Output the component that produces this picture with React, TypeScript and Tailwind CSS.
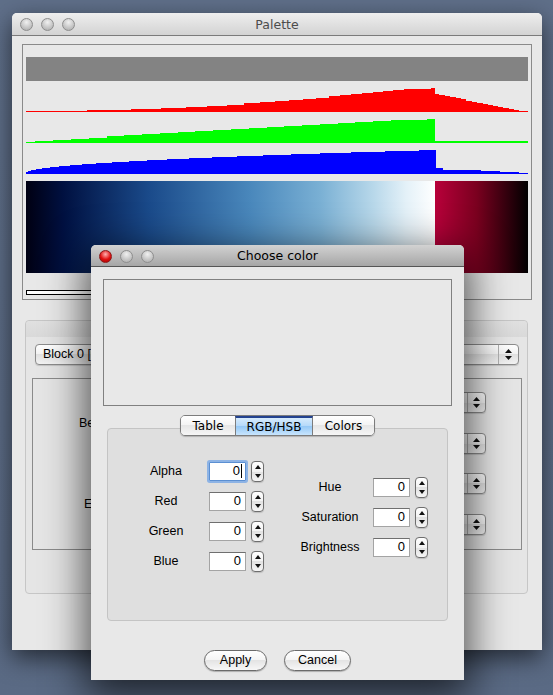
import React from 'react';

type Step = [number, number];

// histogram steps: [absolute x where the step starts, height]
const red: Step[] = [
  [26, 1], [87, 2.3], [131, 3.3], [161, 4.3], [186, 5.3], [207, 6.3], [227, 7.3], [244, 9], [260, 10],
  [275, 11], [289, 12], [303, 13.3], [316, 14.3], [329, 15.7], [340, 16.7], [351, 17.7], [362, 18.7],
  [373, 19.7], [383, 20.7], [393, 21.7], [404, 22.7], [413, 23], [423, 23.3], [431, 24.3],
  [435, 17.7], [439, 16.7], [445, 15.7], [450, 14.7], [456, 13.7], [461, 12.7], [466, 11.3], [472, 10.3],
  [477, 9.3], [483, 8], [488, 7], [493, 6], [498, 5], [503, 4], [509, 3], [514, 2], [519, 1], [525, 0.7],
];

const green: Step[] = [
  [26, 1.3], [35, 2.3], [53, 3.3], [71, 4.3], [89, 5.3], [107, 6.7], [124, 7.7], [142, 8.7], [160, 10],
  [178, 11], [195, 12], [213, 13], [231, 14], [249, 15], [267, 16], [284, 17], [302, 18], [320, 19],
  [338, 20], [355, 21], [373, 22], [391, 23], [409, 23.3], [427, 24.3], [435, 1.7],
];

const blue: Step[] = [
  [26, 2], [28, 3], [31.4, 4], [35.9, 5], [42.1, 6], [50, 7], [59, 8], [70, 9.3], [82, 10.3], [96.2, 11.3],
  [112, 12.3], [129.3, 13.3], [147.2, 14.3], [167.2, 15.3], [189.3, 16.3], [212.4, 17.3], [237.2, 18.3],
  [263.4, 19.3], [291.4, 20.3], [320.3, 21.3], [351.4, 22.3], [384.5, 22.7], [418.6, 23.7],
  [435.5, 5.7], [442.7, 4.3], [461.7, 3.7], [481, 2.7], [500, 1.7], [519, 0.7],
];

function stepPath(steps: Step[], end: number, base: number) {
  let d = `M ${steps[0][0] - 26} ${base}`;
  steps.forEach(([x, h], i) => {
    const next = i < steps.length - 1 ? steps[i + 1][0] : end;
    d += ` L ${x - 26} ${base - h} L ${next - 26} ${base - h}`;
  });
  d += ` L ${end - 26} ${base} Z`;
  return d;
}

const Light: React.FC<{ red?: boolean }> = ({ red }) => (
  <div
    className={
      red
        ? 'w-[13px] h-[13px] rounded-full border border-[#8a1a1a] bg-[radial-gradient(circle_at_50%_30%,#ffb0b0,#e01010_55%,#a00000)]'
        : 'w-[13px] h-[13px] rounded-full border border-[#8e8e8e] bg-[radial-gradient(circle_at_50%_30%,#f0f0f0,#c4c4c4_60%,#a8a8a8)]'
    }
  />
);

const Arrows: React.FC = () => (
  <div className="flex flex-col items-center gap-[3px]">
    <svg width="7" height="4" viewBox="0 0 7 4"><path d="M3.5 0L7 4H0z" fill="#111" /></svg>
    <svg width="7" height="4" viewBox="0 0 7 4"><path d="M0 0H7L3.5 4z" fill="#111" /></svg>
  </div>
);

const Spin: React.FC = () => (
  <div className="ml-[5px] w-[13px] h-[21px] rounded-[4px] border border-[#6e6e6e] bg-[linear-gradient(#ffffff,#f2f2f2_50%,#e2e2e2_50%,#f5f5f5)] flex flex-col items-center justify-between py-[3px] shadow-[0_1px_1px_rgba(0,0,0,0.15)]">
    <svg width="6" height="4" viewBox="0 0 6 4"><path d="M3 0L6 4H0z" fill="#111" /></svg>
    <svg width="6" height="4" viewBox="0 0 6 4"><path d="M0 0H6L3 4z" fill="#111" /></svg>
  </div>
);

const Field: React.FC<{ focused?: boolean }> = ({ focused }) => (
  <div
    className={
      focused
        ? 'w-[37px] h-[19px] bg-white border border-[#5b8fd2] shadow-[0_0_0_2px_rgba(120,168,230,0.8)] rounded-[1px] flex items-center justify-end pr-[3px] text-[13px] text-black font-["Liberation_Sans",Arial,sans-serif]'
        : 'w-[37px] h-[19px] bg-white border border-[#a4a4a4] border-t-[#6f6f6f] flex items-center justify-end pr-[4px] text-[13px] text-black font-["Liberation_Sans",Arial,sans-serif]'
    }
  >
    0{focused && <span className="ml-[1px] w-px h-[14px] bg-black" />}
  </div>
);

const Row: React.FC<{ label: string; labelW: string; focused?: boolean }> = ({ label, labelW, focused }) => (
  <div className="h-[30px] flex items-center">
    <div className={labelW}>{label}</div>
    <Field focused={focused} />
    <Spin />
  </div>
);

const SideCombo: React.FC = () => (
  <div className="w-[120px] h-[21px] rounded-[4px] border border-[#8c8c8c] bg-[linear-gradient(#ffffff,#f2f2f2_50%,#e1e1e1_50%,#f3f3f3)] flex justify-end shadow-[0_1px_1px_rgba(0,0,0,0.15)]">
    <div className="w-[18px] border-l border-[#b0b0b0] flex items-center justify-center">
      <Arrows />
    </div>
  </div>
);

export default function App() {
  return (
    <div className="relative w-[553px] h-[695px] overflow-hidden bg-[linear-gradient(#5f6f89,#5a6a84)] font-['Liberation_Sans',Arial,sans-serif] text-[12px] text-black">
      {/* Palette window */}
      <div className="absolute left-[12px] top-[13px] w-[530px] h-[637px] rounded-t-[5px] bg-[#e8e8e8] shadow-[0_8px_24px_rgba(0,0,0,0.6)] flex flex-col">
        <div className="h-[23px] rounded-t-[5px] border-b border-[#7b7b7b] bg-[linear-gradient(#eeeeee,#d3d3d3)] grid grid-cols-[1fr_auto_1fr] items-center">
          <div className="flex gap-[8px] pl-[8px] pt-[1px]">
            <Light />
            <Light />
            <Light />
          </div>
          <div className="text-[12.5px] text-[#4c4c4c] font-['DejaVu_Sans',sans-serif] pt-[2px]">Palette</div>
          <div />
        </div>

        <div className="px-[10px] pt-[8px] flex flex-col">
          <div className="h-[256px] border border-[#8a8a8a] px-[3px] pt-[12px] flex flex-col">
            <div className="h-[24px] bg-[#838383]" />
            <svg width="502" height="97" viewBox="0 0 502 97" shapeRendering="crispEdges">
              <path d={stepPath(red, 528, 31)} fill="#ff0000" />
              <path d={stepPath(green, 528, 62)} fill="#00ff00" />
              <path d={stepPath(blue, 528, 93)} fill="#0000ff" />
            </svg>
            <div className="mt-[3px] h-[92px] flex">
              <div className="w-[409px] bg-[linear-gradient(to_right,#000012,#001040_9%,#1a4a8a_30%,#4a88bc_55%,#7ab0d4_72%,#b8d8ea_85%,#e4f1f8_93%,#ffffff)]" />
              <div className="flex-1 bg-[linear-gradient(to_right,#b8003a,#7a001f_45%,#000000)]" />
            </div>
            <div className="mt-[17px] w-[200px] h-[5px] border border-black bg-white" />
          </div>

          <div className="mt-[20px] ml-[3px] mr-[4px] h-[274px] rounded-[4px] border border-[#c6c6c6] bg-[#e5e5e5] flex flex-col">
            <div className="h-[16px] rounded-t-[4px] bg-[linear-gradient(#e0e0e0,#d9d9d9)]" />
            <div className="mt-[7px] ml-[9px] mr-[8px] h-[21px] rounded-[4px] border border-[#8c8c8c] bg-[linear-gradient(#ffffff,#f2f2f2_50%,#e1e1e1_50%,#f3f3f3)] flex items-center shadow-[0_1px_1px_rgba(0,0,0,0.15)]">
              <div className="flex-1 pl-[7px] text-[12.5px]">Block 0 [0 - 255]</div>
              <div className="w-[20px] h-full border-l border-[#b0b0b0] flex items-center justify-center">
                <Arrows />
              </div>
            </div>
            <div className="mt-[13px] ml-[6px] mr-[5px] h-[172px] border border-[#8a8a8a] pt-[13px] flex flex-col gap-[19px]">
              <div className="flex items-center justify-between pr-[35px]">
                <div className="pl-[46px] text-[12.5px]">Begin</div>
                <div className="flex flex-col gap-[20px]">
                  <SideCombo />
                  <SideCombo />
                </div>
              </div>
              <div className="flex items-center justify-between pr-[35px]">
                <div className="pl-[51px] text-[12.5px]">End</div>
                <div className="flex flex-col gap-[20px]">
                  <SideCombo />
                  <SideCombo />
                </div>
              </div>
            </div>
          </div>
        </div>
      </div>

      {/* Choose color dialog */}
      <div className="absolute left-[91px] top-[245px] w-[373px] h-[435px] rounded-t-[5px] bg-[#e8e8e8] shadow-[0_12px_40px_6px_rgba(0,0,0,0.65)] flex flex-col">
        <div className="h-[22px] rounded-t-[5px] border-b border-[#555555] bg-[linear-gradient(#d2d2d2,#a6a6a6)] grid grid-cols-[1fr_auto_1fr] items-center">
          <div className="flex gap-[8px] pl-[8px] pt-[1px]">
            <Light red />
            <Light />
            <Light />
          </div>
          <div className="text-[12.5px] text-black font-['DejaVu_Sans',sans-serif] pt-[2px]">Choose color</div>
          <div />
        </div>

        <div className="mx-[12px] mt-[12px] h-[127px] border border-[#808080]" />

        <div className="mt-[9px] relative z-10 flex justify-center">
          <div className="h-[21px] flex rounded-[5px] border border-[#7c7c7c] overflow-hidden shadow-[0_1px_1px_rgba(0,0,0,0.2)] font-['DejaVu_Sans',sans-serif] text-[12px]">
            <div className="w-[54px] flex items-center justify-center bg-[linear-gradient(#ffffff,#f3f3f3_50%,#e6e6e6_50%,#f6f6f6)]">Table</div>
            <div className="w-[78px] flex items-center justify-center border-x border-[#7c7c7c] border-t-2 border-t-[#22428f] bg-[linear-gradient(#d6ebfd,#b3d8f9_50%,#96c9f6_50%,#c8e5fd)]">RGB/HSB</div>
            <div className="w-[61px] flex items-center justify-center bg-[linear-gradient(#ffffff,#f3f3f3_50%,#e6e6e6_50%,#f6f6f6)]">Colors</div>
          </div>
        </div>

        <div className="-mt-[8px] mx-[16px] h-[193px] rounded-[4px] border border-[#c4c4c4] bg-[#dfdfdf] pt-[27px] pl-[28px] flex">
          <div className="flex flex-col">
            <Row label="Alpha" labelW="w-[60px] mr-[13px] text-center text-[12.5px]" focused />
            <Row label="Red" labelW="w-[60px] mr-[13px] text-center text-[12.5px]" />
            <Row label="Green" labelW="w-[60px] mr-[13px] text-center text-[12.5px]" />
            <Row label="Blue" labelW="w-[60px] mr-[13px] text-center text-[12.5px]" />
          </div>
          <div className="ml-[32px] mt-[16px] flex flex-col">
            <Row label="Hue" labelW="w-[68px] mr-[9px] text-center text-[12.5px]" />
            <Row label="Saturation" labelW="w-[68px] mr-[9px] text-center text-[12.5px]" />
            <Row label="Brightness" labelW="w-[68px] mr-[9px] text-center text-[12.5px]" />
          </div>
        </div>

        <div className="mt-[29px] flex justify-center gap-[17px]">
          <button className="w-[63px] h-[21px] rounded-full border border-[#6b6b6b] bg-[linear-gradient(#ffffff,#f4f4f4_50%,#e4e4e4_50%,#f7f7f7)] shadow-[0_1px_1px_rgba(0,0,0,0.25)] text-[12.5px]">Apply</button>
          <button className="w-[67px] h-[21px] rounded-full border border-[#6b6b6b] bg-[linear-gradient(#ffffff,#f4f4f4_50%,#e4e4e4_50%,#f7f7f7)] shadow-[0_1px_1px_rgba(0,0,0,0.25)] text-[12.5px]">Cancel</button>
        </div>
      </div>
    </div>
  );
}
